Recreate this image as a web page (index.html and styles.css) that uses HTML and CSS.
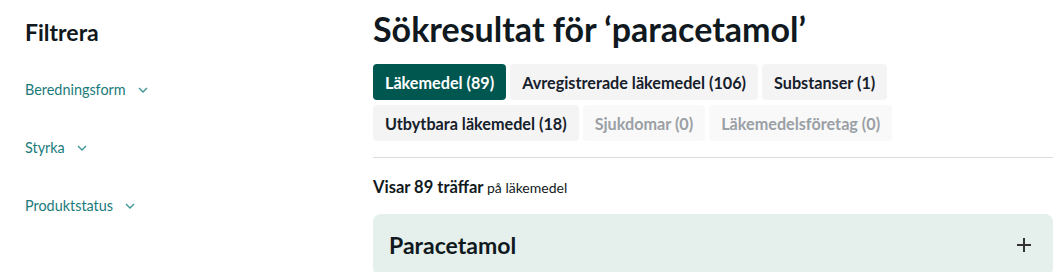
FILE: index.html
```html
<!DOCTYPE html>
<html lang="sv">
<head>
<meta charset="utf-8">
<title>Sökresultat</title>
<link rel="stylesheet" href="styles.css">
</head>
<body>
<div class="page">
  <aside class="sidebar">
    <h2 class="filter-title">Filtrera</h2>
    <ul class="filters">
      <li class="filter">Beredningsform <svg class="chev" viewBox="0 0 10 6" width="10" height="6"><path d="M1 1l4 4 4-4" fill="none" stroke="currentColor" stroke-width="1.3"/></svg></li>
      <li class="filter">Styrka <svg class="chev" viewBox="0 0 10 6" width="10" height="6"><path d="M1 1l4 4 4-4" fill="none" stroke="currentColor" stroke-width="1.3"/></svg></li>
      <li class="filter">Produktstatus <svg class="chev" viewBox="0 0 10 6" width="10" height="6"><path d="M1 1l4 4 4-4" fill="none" stroke="currentColor" stroke-width="1.3"/></svg></li>
    </ul>
  </aside>
  <main class="main">
    <h1 class="title">Sökresultat för ‘paracetamol’</h1>
    <div class="tabs">
      <span class="tab active">Läkemedel (89)</span>
      <span class="tab">Avregistrerade läkemedel (106)</span>
      <span class="tab">Substanser (1)</span>
      <span class="tab">Utbytbara läkemedel (18)</span>
      <span class="tab disabled">Sjukdomar (0)</span>
      <span class="tab disabled">Läkemedelsföretag (0)</span>
    </div>
    <hr class="divider">
    <p class="count"><strong>Visar 89 träffar</strong> på läkemedel</p>
    <div class="card">
      <span class="card-title">Paracetamol</span>
      <svg class="plus" viewBox="0 0 14 14" width="14" height="14"><path d="M7 0v14M0 7h14" stroke="currentColor" stroke-width="2"/></svg>
    </div>
  </main>
</div>
</body>
</html>
```
FILE: styles.css
```css
html, body {
  margin: 0;
  padding: 0;
  background: #fff;
}
body {
  font-family: Lato, "Noto Sans", sans-serif;
  color: #101820;
}
.page {
  display: flex;
  padding-left: 25px;
  padding-right: 3px;
}
.sidebar {
  width: 348px;
  flex: none;
}
.filter-title {
  margin: 18px 0 0;
  font-size: 23px;
  font-weight: 700;
  line-height: 28px;
}
.filters {
  list-style: none;
  margin: 34px 0 0;
  padding: 0;
  display: flex;
  flex-direction: column;
  gap: 38px;
}
.filter {
  color: #1b7b7b;
  font-size: 14.4px;
  line-height: 20px;
  display: flex;
  align-items: center;
  gap: 12px;
}
.chev {
  color: #3a9494;
}
.main {
  flex: 1;
  min-width: 0;
}
.title {
  margin: 9px 0 0;
  font-size: 34px;
  line-height: 40px;
  font-weight: 700;
}
.tabs {
  margin-top: 15px;
  display: flex;
  flex-wrap: wrap;
  gap: 5px 4px;
  max-width: 540px;
}
.tab {
  background: #f5f4f4;
  border-radius: 4px;
  height: 36px;
  padding: 0 12px;
  display: flex;
  align-items: center;
  font-size: 16.2px;
  font-weight: 700;
  color: #15202b;
}
.tab.active {
  background: #00574f;
  color: #fff;
}
.tab.disabled {
  background: #f9f9f9;
  color: #9aa0a5;
}
.divider {
  margin: 16px 0 0;
  border: 0;
  border-top: 1px solid #dcdcdc;
}
.count {
  margin: 20px 0 0;
  font-size: 14px;
  line-height: 18px;
}
.count strong {
  font-size: 16.5px;
}
.card {
  margin-top: 17px;
  background: #e5f0ec;
  border-radius: 8px;
  height: 62px;
  display: flex;
  align-items: center;
  justify-content: space-between;
  padding: 0 22px 0 16px;
}
.card-title {
  font-size: 23px;
  font-weight: 700;
}
.plus {
  color: #333;
}
```
